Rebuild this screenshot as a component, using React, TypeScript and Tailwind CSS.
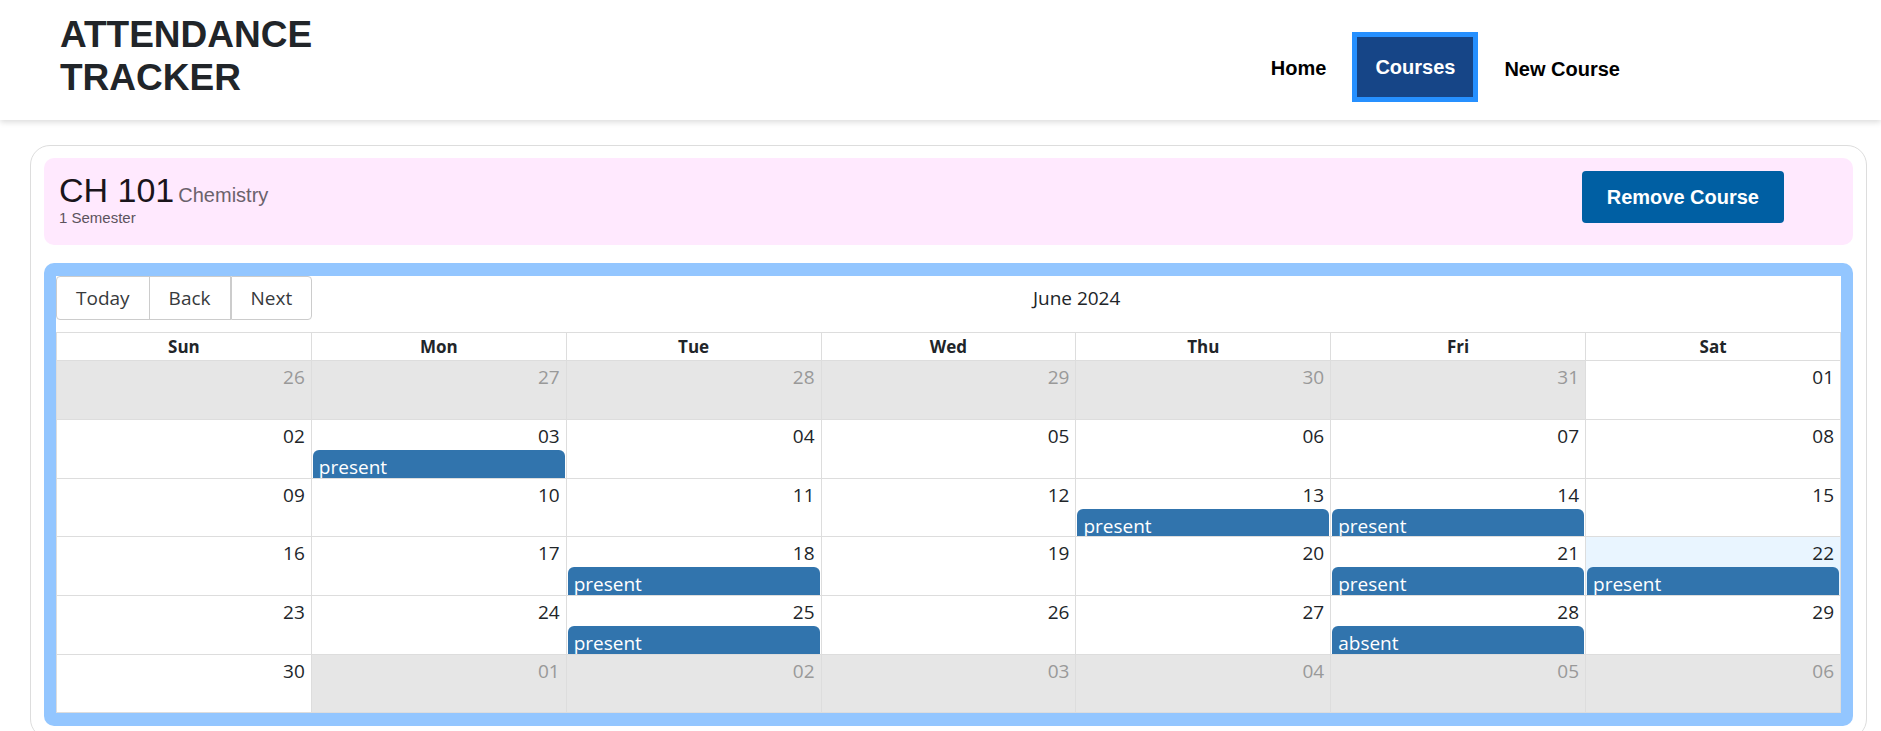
type CalendarDay = {
  label: string;
  outside?: boolean;
  today?: boolean;
  event?: string;
};

const weekdays = ["Sun", "Mon", "Tue", "Wed", "Thu", "Fri", "Sat"];

const events: Record<number, string> = {
  3: "present",
  13: "present",
  14: "present",
  18: "present",
  21: "present",
  22: "present",
  25: "present",
  28: "absent",
};

const TODAY = 22;
const pad = (n: number) => String(n).padStart(2, "0");

function buildWeeks(): CalendarDay[][] {
  const days: CalendarDay[] = [];
  for (let d = 26; d <= 31; d++) days.push({ label: pad(d), outside: true });
  for (let d = 1; d <= 30; d++) days.push({ label: pad(d), today: d === TODAY, event: events[d] });
  for (let d = 1; d <= 6; d++) days.push({ label: pad(d), outside: true });
  const weeks: CalendarDay[][] = [];
  for (let i = 0; i < days.length; i += 7) weeks.push(days.slice(i, i + 7));
  return weeks;
}

function Header() {
  return (
    <header className="flex h-[120px] items-start justify-between bg-white pl-[60px] pr-[261px] shadow-[0_2px_6px_rgba(0,0,0,0.15)]">
      <h1 className="max-w-[300px] pt-[13px] text-[37px] leading-[43px] font-bold text-[#212529]">
        ATTENDANCE TRACKER
      </h1>
      <nav className="flex items-center gap-[26px] pt-8 text-xl leading-6 font-bold text-black">
        <a href="#home" className="pt-0.5">
          Home
        </a>
        <a
          href="#courses"
          aria-current="page"
          className="flex h-[70px] items-center border-[5px] border-[#2690ff] bg-[#164587] px-[18px] text-white"
        >
          Courses
        </a>
        <a href="#new-course" className="pt-1">
          New Course
        </a>
      </nav>
    </header>
  );
}

function CourseBanner() {
  return (
    <section className="flex items-start justify-between rounded-[10px] bg-[#ffe9fe] pt-3 pr-[69px] pb-[19px] pl-[15px]">
      <div>
        <h2 className="flex items-baseline gap-1 text-[34px] leading-10 text-[#1a151b]">
          CH 101 <span className="text-xl leading-none text-[#6b626c]">Chemistry</span>
        </h2>
        <p className="text-[15px] leading-4 text-[#5c535d]">1 Semester</p>
      </div>
      <button
        type="button"
        className="mt-px h-[52px] rounded bg-[#005fa3] px-[25px] text-xl leading-6 font-bold text-white"
      >
        Remove Course
      </button>
    </section>
  );
}

function DayCell({ day, short }: { day: CalendarDay; short: boolean }) {
  const background = day.outside ? "bg-[#e6e6e6]" : day.today ? "bg-[#e9f5ff]" : "bg-white";
  return (
    <td className={`border-r border-b border-[#dddddd] p-0 align-top ${background}`}>
      <div className={`overflow-hidden ${short ? "h-[57px]" : "h-[58px]"}`}>
        <div
          className={`pt-0.5 pr-1.5 text-right leading-7 ${day.outside ? "text-[#999999]" : "text-[#212529]"}`}
        >
          {day.label}
        </div>
        {day.event && (
          <div className="mx-px rounded-md bg-[#3174ad] px-1.5 pt-[3px] pb-1 leading-7 text-white">
            {day.event}
          </div>
        )}
      </div>
    </td>
  );
}

function Calendar() {
  const toolButton = "h-11 border border-[#cccccc] bg-white px-[19px] text-[#373a3c]";
  return (
    <section className="mt-[18px] rounded-[10px] bg-[#93c6ff] px-3 py-[13px] font-['Open_Sans','Noto_Sans',sans-serif] text-[19px]">
      <div className="bg-white">
        <div className="flex items-center pb-3">
          <div className="flex">
            <button type="button" className={`${toolButton} rounded-l`}>
              Today
            </button>
            <button type="button" className={`${toolButton} -ml-px`}>
              Back
            </button>
            <button type="button" className={`${toolButton} rounded-r`}>
              Next
            </button>
          </div>
          <div className="flex-1 text-center text-[#212529]">June 2024</div>
        </div>
        <table className="w-full table-fixed border-separate border-spacing-0 border-t border-l border-[#dddddd]">
          <thead>
            <tr>
              {weekdays.map((name) => (
                <th
                  key={name}
                  scope="col"
                  className="h-7 border-r border-b border-[#dddddd] p-0 text-[17px] leading-6 font-bold text-[#212529]"
                >
                  {name}
                </th>
              ))}
            </tr>
          </thead>
          <tbody>
            {buildWeeks().map((week, w) => (
              <tr key={w}>
                {week.map((day, d) => (
                  <DayCell key={d} day={day} short={w % 3 === 2} />
                ))}
              </tr>
            ))}
          </tbody>
        </table>
      </div>
    </section>
  );
}

export default function App() {
  return (
    <div className="bg-white font-['Liberation_Sans',Arial,sans-serif]">
      <Header />
      <main className="mt-[25px] mr-3.5 ml-[30px] rounded-[20px] border border-[#dddddd] px-[13px] py-3">
        <CourseBanner />
        <Calendar />
      </main>
    </div>
  );
}
